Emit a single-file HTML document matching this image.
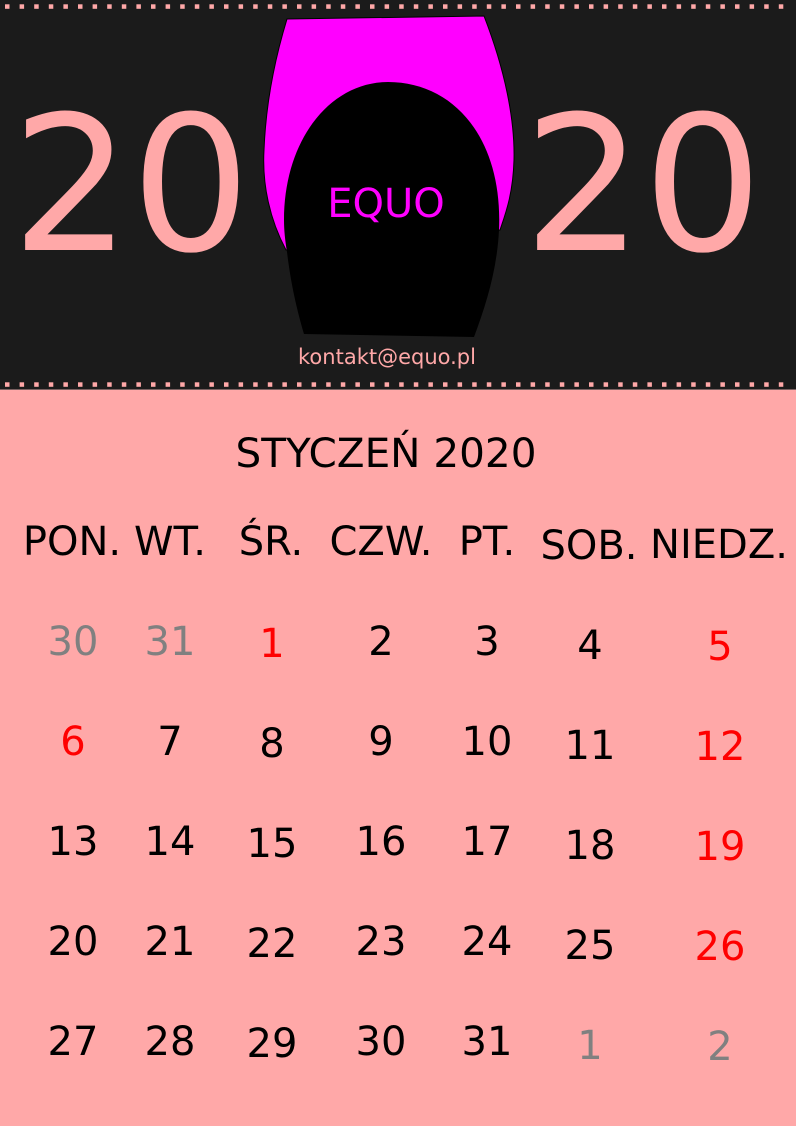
<!DOCTYPE html>
<html><head><meta charset="utf-8"><style>
html,body{margin:0;padding:0;}
body{width:796px;height:1126px;overflow:hidden;background:#ffa8a8;}
svg{display:block;}
text{font-family:"DejaVu Sans","Liberation Sans",sans-serif;}
</style></head><body>
<svg width="796" height="1126" viewBox="0 0 796 1126" xmlns="http://www.w3.org/2000/svg">
<rect x="0" y="0" width="796" height="390" fill="#1b1b1b"/>
<rect x="0" y="389" width="796" height="1" fill="#7a6060"/>
<g id="dotrow" fill="#ffa8a8">
<rect x="5" y="4.3" width="4.5" height="4.5"/><rect x="19.6" y="4.3" width="4.5" height="4.5"/><rect x="34.2" y="4.3" width="4.5" height="4.5"/><rect x="48.8" y="4.3" width="4.5" height="4.5"/><rect x="63.4" y="4.3" width="4.5" height="4.5"/><rect x="78" y="4.3" width="4.5" height="4.5"/><rect x="92.6" y="4.3" width="4.5" height="4.5"/><rect x="107.2" y="4.3" width="4.5" height="4.5"/><rect x="121.8" y="4.3" width="4.5" height="4.5"/><rect x="136.4" y="4.3" width="4.5" height="4.5"/><rect x="151" y="4.3" width="4.5" height="4.5"/><rect x="165.6" y="4.3" width="4.5" height="4.5"/><rect x="180.2" y="4.3" width="4.5" height="4.5"/><rect x="194.8" y="4.3" width="4.5" height="4.5"/><rect x="209.4" y="4.3" width="4.5" height="4.5"/><rect x="224" y="4.3" width="4.5" height="4.5"/><rect x="238.6" y="4.3" width="4.5" height="4.5"/><rect x="253.2" y="4.3" width="4.5" height="4.5"/><rect x="267.8" y="4.3" width="4.5" height="4.5"/><rect x="282.4" y="4.3" width="4.5" height="4.5"/><rect x="297" y="4.3" width="4.5" height="4.5"/><rect x="311.6" y="4.3" width="4.5" height="4.5"/><rect x="326.2" y="4.3" width="4.5" height="4.5"/><rect x="340.8" y="4.3" width="4.5" height="4.5"/><rect x="355.4" y="4.3" width="4.5" height="4.5"/><rect x="370" y="4.3" width="4.5" height="4.5"/><rect x="384.6" y="4.3" width="4.5" height="4.5"/><rect x="399.2" y="4.3" width="4.5" height="4.5"/><rect x="413.8" y="4.3" width="4.5" height="4.5"/><rect x="428.4" y="4.3" width="4.5" height="4.5"/><rect x="443" y="4.3" width="4.5" height="4.5"/><rect x="457.6" y="4.3" width="4.5" height="4.5"/><rect x="472.2" y="4.3" width="4.5" height="4.5"/><rect x="486.8" y="4.3" width="4.5" height="4.5"/><rect x="501.4" y="4.3" width="4.5" height="4.5"/><rect x="516" y="4.3" width="4.5" height="4.5"/><rect x="530.6" y="4.3" width="4.5" height="4.5"/><rect x="545.2" y="4.3" width="4.5" height="4.5"/><rect x="559.8" y="4.3" width="4.5" height="4.5"/><rect x="574.4" y="4.3" width="4.5" height="4.5"/><rect x="589" y="4.3" width="4.5" height="4.5"/><rect x="603.6" y="4.3" width="4.5" height="4.5"/><rect x="618.2" y="4.3" width="4.5" height="4.5"/><rect x="632.8" y="4.3" width="4.5" height="4.5"/><rect x="647.4" y="4.3" width="4.5" height="4.5"/><rect x="662" y="4.3" width="4.5" height="4.5"/><rect x="676.6" y="4.3" width="4.5" height="4.5"/><rect x="691.2" y="4.3" width="4.5" height="4.5"/><rect x="705.8" y="4.3" width="4.5" height="4.5"/><rect x="720.4" y="4.3" width="4.5" height="4.5"/><rect x="735" y="4.3" width="4.5" height="4.5"/><rect x="749.6" y="4.3" width="4.5" height="4.5"/><rect x="764.2" y="4.3" width="4.5" height="4.5"/><rect x="778.8" y="4.3" width="4.5" height="4.5"/>
</g>
<use href="#dotrow" transform="translate(0,378)"/>

<text x="131" y="250" font-size="188" fill="#ffa8a8" text-anchor="middle">20</text>
<text x="643" y="250" font-size="188" fill="#ffa8a8" text-anchor="middle">20</text>

<path d="M287,19 L484,16 C505,70 515,120 514,160 C513,195 505,215 500,230 L286,250 C270,220 262,185 264,150 C266,100 276,55 287,19 Z" fill="#ff00ff" stroke="#000" stroke-width="1"/>
<path d="M388,82 C330,82 284,140 284,220 C284,230 285,240 287,252 C291,285 297,310 304,334 L474,337 C486,305 497,270 499,230 C503,140 455,82 388,82 Z" fill="#000"/>
<text x="386" y="217" font-size="40" fill="#ff00ff" text-anchor="middle">EQUO</text>
<text x="387" y="364" font-size="21" fill="#ffa8a8" text-anchor="middle">kontakt@equo.pl</text>

<g font-size="40" fill="#000" text-anchor="middle">
<text x="386" y="467" textLength="301" lengthAdjust="spacingAndGlyphs">STYCZEŃ 2020</text>
<text x="72" y="555">PON.</text>
<text x="170" y="555">WT.</text>
<text x="271" y="555">ŚR.</text>
<text x="381" y="555">CZW.</text>
<text x="487" y="555">PT.</text>
<text x="589" y="559">SOB.</text>
<text x="719" y="558">NIEDZ.</text>
</g>

<g font-size="40" text-anchor="middle">
<text x="73" y="655" fill="#808080">30</text>
<text x="170" y="655" fill="#808080">31</text>
<text x="272" y="657" fill="#ff0000">1</text>
<text x="381" y="655" fill="#000">2</text>
<text x="487" y="655" fill="#000">3</text>
<text x="590" y="659" fill="#000">4</text>
<text x="720" y="660" fill="#ff0000">5</text>

<text x="73" y="755" fill="#ff0000">6</text>
<text x="170" y="755" fill="#000">7</text>
<text x="272" y="757" fill="#000">8</text>
<text x="381" y="755" fill="#000">9</text>
<text x="487" y="755" fill="#000">10</text>
<text x="590" y="759" fill="#000">11</text>
<text x="720" y="760" fill="#ff0000">12</text>

<text x="73" y="855" fill="#000">13</text>
<text x="170" y="855" fill="#000">14</text>
<text x="272" y="857" fill="#000">15</text>
<text x="381" y="855" fill="#000">16</text>
<text x="487" y="855" fill="#000">17</text>
<text x="590" y="859" fill="#000">18</text>
<text x="720" y="860" fill="#ff0000">19</text>

<text x="73" y="955" fill="#000">20</text>
<text x="170" y="955" fill="#000">21</text>
<text x="272" y="957" fill="#000">22</text>
<text x="381" y="955" fill="#000">23</text>
<text x="487" y="955" fill="#000">24</text>
<text x="590" y="959" fill="#000">25</text>
<text x="720" y="960" fill="#ff0000">26</text>

<text x="73" y="1055" fill="#000">27</text>
<text x="170" y="1055" fill="#000">28</text>
<text x="272" y="1057" fill="#000">29</text>
<text x="381" y="1055" fill="#000">30</text>
<text x="487" y="1055" fill="#000">31</text>
<text x="590" y="1059" fill="#808080">1</text>
<text x="720" y="1060" fill="#808080">2</text>
</g>
</svg>
</body></html>
